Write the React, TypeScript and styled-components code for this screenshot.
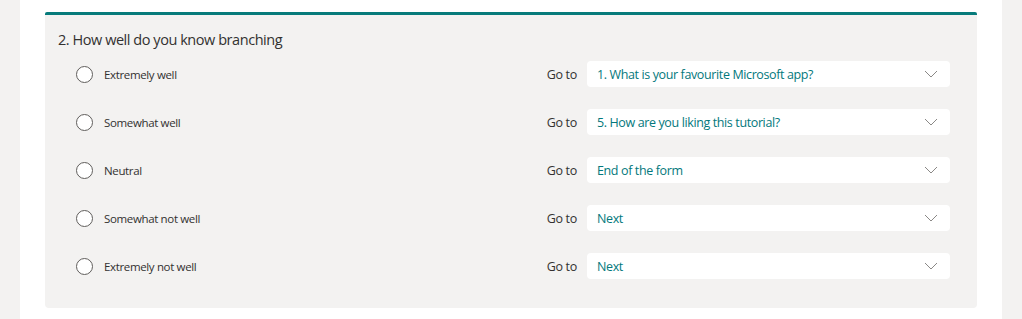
import { FC } from 'react';
import styled, { createGlobalStyle } from 'styled-components';

const GlobalStyle = createGlobalStyle`
    html, body {
        margin: 0;
        padding: 0;
        background: #f3f2f1;
        font-family: "Open Sans", "Noto Sans", "Liberation Sans", sans-serif;
        color: #323130;
    }
`;

const Page = styled.div`
    margin: 0 20px;
    background: #ffffff;
    height: 319px;
    padding: 12px 25px 0 25px;
    box-sizing: border-box;
`;

const Card = styled.div`
    background: #f3f2f1;
    border-top: 3px solid #077b7b;
    border-radius: 2px 2px 4px 4px;
    padding: 15px 27px 18px 13px;
`;

const Title = styled.div`
    font-size: 14.5px;
    line-height: 20px;
    height: 20px;
    letter-spacing: -0.45px;
`;

const Row = styled.div`
    display: flex;
    align-items: center;
    height: 48px;
`;

const Radio = styled.span`
    width: 15px;
    height: 15px;
    border: 1px solid #605e5c;
    border-radius: 50%;
    background: #ffffff;
    margin-left: 18px;
    flex-shrink: 0;
`;

const Label = styled.span`
    font-size: 11.5px;
    margin-left: 11px;
    flex: 1;
    letter-spacing: -0.35px;
`;

const GoTo = styled.span`
    font-size: 12.5px;
    margin-right: 10px;
    letter-spacing: -0.3px;
`;

const Select = styled.div`
    width: 363px;
    height: 26px;
    background: #ffffff;
    border-radius: 4px;
    display: flex;
    align-items: center;
    justify-content: space-between;
    padding: 0 10px;
    box-sizing: border-box;
    color: #03787c;
    font-size: 12.5px;
    letter-spacing: -0.38px;
`;

const Chevron = styled.svg`
    width: 14px;
    height: 8px;
    margin-right: 2px;
`;

interface IOption {
    label: string;
    target: string;
}

const options: IOption[] = [
    { label: 'Extremely well', target: '1. What is your favourite Microsoft app?' },
    { label: 'Somewhat well', target: '5. How are you liking this tutorial?' },
    { label: 'Neutral', target: 'End of the form' },
    { label: 'Somewhat not well', target: 'Next' },
    { label: 'Extremely not well', target: 'Next' },
];

const App: FC = () => {
    return (
        <>
            <GlobalStyle />
            <Page>
                <Card>
                    <Title>2. How well do you know branching</Title>
                    {options.map((o) => (
                        <Row key={o.label}>
                            <Radio />
                            <Label>{o.label}</Label>
                            <GoTo>Go to</GoTo>
                            <Select>
                                <span>{o.target}</span>
                                <Chevron viewBox="0 0 14 8">
                                    <path d="M1 1 L7 7 L13 1" fill="none" stroke="#8a8886" strokeWidth="1" />
                                </Chevron>
                            </Select>
                        </Row>
                    ))}
                </Card>
            </Page>
        </>
    );
};

export default App;
